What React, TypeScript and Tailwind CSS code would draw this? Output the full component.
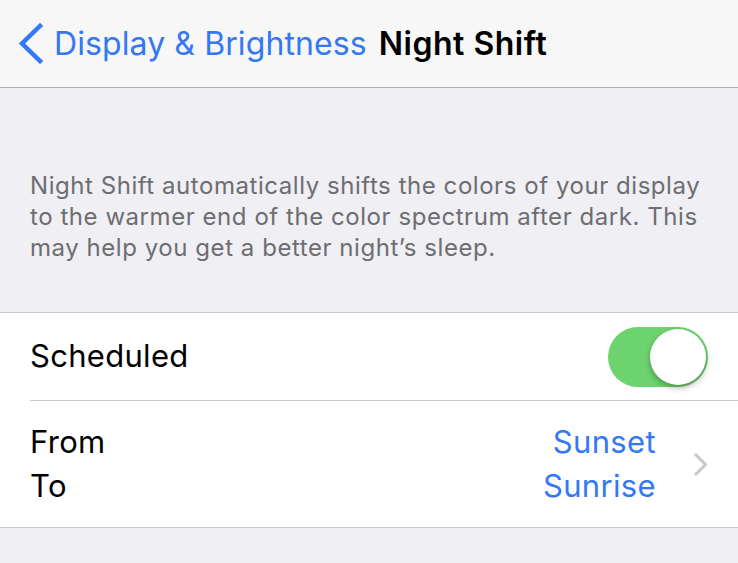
export default function App() {
  return (
    <div className="w-[738px] h-[563px] overflow-hidden bg-[#efeff4] font-['Inter','Noto_Sans',sans-serif] antialiased">
      <header className="h-[88px] bg-[#f7f7f7] border-b border-[#b2b2b2] flex items-center">
        <div className="flex items-center pl-[17px] text-[#3478f6]">
          <svg width="26" height="41" viewBox="0 0 26 41" fill="none">
            <path
              d="M23 3 L5 20.5 L23 38"
              stroke="currentColor"
              strokeWidth="4.5"
              strokeLinecap="square"
            />
          </svg>
          <span className="ml-[11px] text-[32px] tracking-[0.1px] leading-none">Display &amp; Brightness</span>
        </div>
        <span className="ml-[12px] text-[32px] font-semibold tracking-[0.5px] leading-none text-black">Night Shift</span>
      </header>

      <div className="pt-[82px] pb-[49px] px-[30px]">
        <p className="text-[24px] leading-[31px] tracking-[0.55px] text-[#6d6d72]">
          Night Shift automatically shifts the colors of your display to the warmer end of the color spectrum after dark. This may help you get a better night’s sleep.
        </p>
      </div>

      <section className="bg-white border-y border-[#c8c7cc]">
        <div className="h-[87px] flex items-center justify-between pl-[30px] pr-[30px]">
          <span className="text-[31px] tracking-[0.3px] text-black">Scheduled</span>
          <div className="relative w-[100px] h-[60px] rounded-full bg-[#6dd36f]">
            <div className="absolute right-[2px] top-[2px] w-[56px] h-[56px] rounded-full bg-white shadow-[0_3px_6px_rgba(0,0,0,0.3)]" />
          </div>
        </div>
        <div className="ml-[30px] border-t border-[#c8c7cc]" />
        <div className="h-[126px] flex items-center pl-[30px] pr-[30px]">
          <div className="flex-1 flex flex-col text-[31px] tracking-[0.3px] leading-[44px] text-black">
            <span>From</span>
            <span>To</span>
          </div>
          <div className="flex flex-col items-end text-[31px] tracking-[0.35px] leading-[44px] text-[#3478f6]">
            <span>Sunset</span>
            <span>Sunrise</span>
          </div>
          <svg className="ml-[37px]" width="15" height="25" viewBox="0 0 15 25" fill="none">
            <path d="M2 2 L12.5 12.5 L2 23" stroke="#c7c7cc" strokeWidth="3" />
          </svg>
        </div>
      </section>
    </div>
  );
}
